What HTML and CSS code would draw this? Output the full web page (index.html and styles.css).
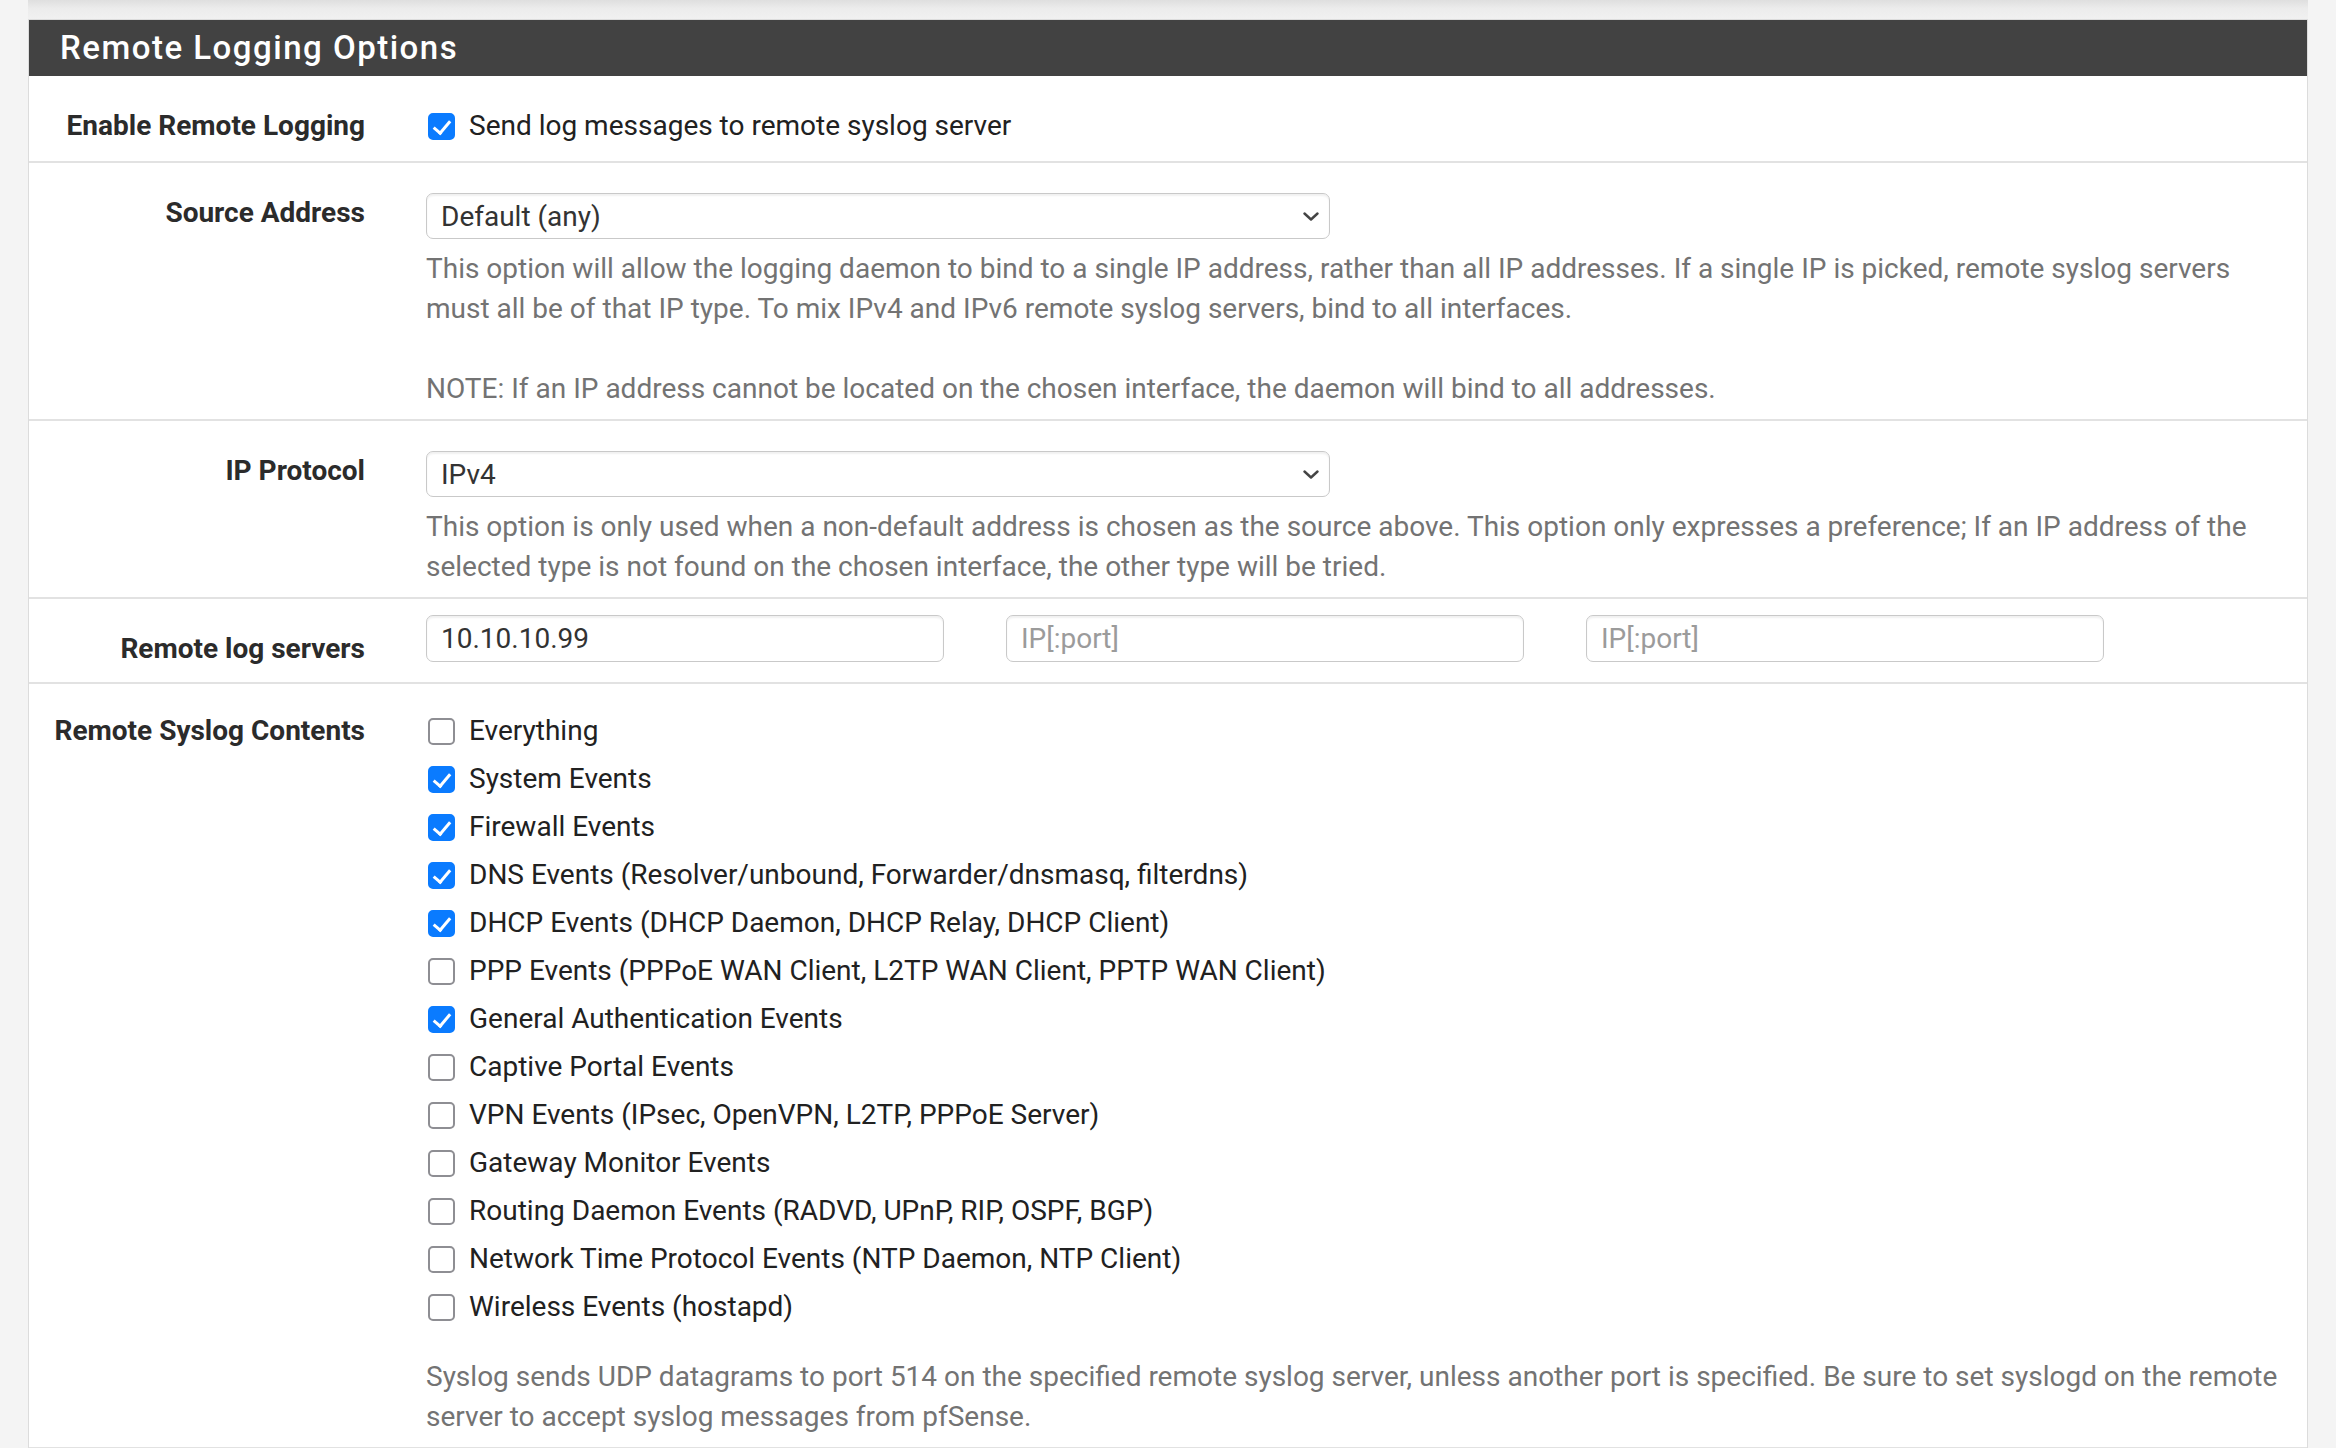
FILE: index.html
```html
<!DOCTYPE html>
<html lang="en">
<head>
    <meta charset="UTF-8">
    <title>Remote Logging Options</title>
    <link rel="stylesheet" href="styles.css">
</head>
<body>
    <div class="container">
        <div class="shade"></div>

        <div class="panel">
            <div class="panel-heading">
                <h2 class="panel-title">Remote Logging Options</h2>
            </div>

            <div class="panel-body">
                <div class="form-group">
                    <span class="control-label">Enable Remote Logging</span>
                    <div class="controls">
                        <label class="check"><input type="checkbox" checked> Send log messages to remote syslog server</label>
                    </div>
                </div>

                <div class="form-group">
                    <span class="control-label">Source Address</span>
                    <div class="controls">
                        <div class="select-wrap">
                            <select class="form-control">
                                <option>Default (any)</option>
                            </select>
                            <svg class="caret" width="16" height="9" viewBox="0 0 16 9"><polyline points="1.5,1.5 8,7.5 14.5,1.5" fill="none" stroke="#444" stroke-width="2.4" stroke-linecap="round" stroke-linejoin="round"/></svg>
                        </div>
                        <p class="help-block">This option will allow the logging daemon to bind to a single IP address, rather than all IP addresses. If a single IP is picked, remote syslog servers<br>must all be of that IP type. To mix IPv4 and IPv6 remote syslog servers, bind to all interfaces.<br><br>NOTE: If an IP address cannot be located on the chosen interface, the daemon will bind to all addresses.</p>
                    </div>
                </div>

                <div class="form-group">
                    <span class="control-label">IP Protocol</span>
                    <div class="controls">
                        <div class="select-wrap">
                            <select class="form-control">
                                <option>IPv4</option>
                            </select>
                            <svg class="caret" width="16" height="9" viewBox="0 0 16 9"><polyline points="1.5,1.5 8,7.5 14.5,1.5" fill="none" stroke="#444" stroke-width="2.4" stroke-linecap="round" stroke-linejoin="round"/></svg>
                        </div>
                        <p class="help-block">This option is only used when a non-default address is chosen as the source above. This option only expresses a preference; If an IP address of the<br>selected type is not found on the chosen interface, the other type will be tried.</p>
                    </div>
                </div>

                <div class="form-group servers">
                    <span class="control-label">Remote log servers</span>
                    <div class="controls server-inputs">
                        <input class="form-control" type="text" value="10.10.10.99">
                        <input class="form-control" type="text" placeholder="IP[:port]">
                        <input class="form-control" type="text" placeholder="IP[:port]">
                    </div>
                </div>

                <div class="form-group contents">
                    <span class="control-label">Remote Syslog Contents</span>
                    <div class="controls">
                        <label class="check"><input type="checkbox"> Everything</label>
                        <label class="check"><input type="checkbox" checked> System Events</label>
                        <label class="check"><input type="checkbox" checked> Firewall Events</label>
                        <label class="check"><input type="checkbox" checked> DNS Events (Resolver/unbound, Forwarder/dnsmasq, filterdns)</label>
                        <label class="check"><input type="checkbox" checked> DHCP Events (DHCP Daemon, DHCP Relay, DHCP Client)</label>
                        <label class="check"><input type="checkbox"> PPP Events (PPPoE WAN Client, L2TP WAN Client, PPTP WAN Client)</label>
                        <label class="check"><input type="checkbox" checked> General Authentication Events</label>
                        <label class="check"><input type="checkbox"> Captive Portal Events</label>
                        <label class="check"><input type="checkbox"> VPN Events (IPsec, OpenVPN, L2TP, PPPoE Server)</label>
                        <label class="check"><input type="checkbox"> Gateway Monitor Events</label>
                        <label class="check"><input type="checkbox"> Routing Daemon Events (RADVD, UPnP, RIP, OSPF, BGP)</label>
                        <label class="check"><input type="checkbox"> Network Time Protocol Events (NTP Daemon, NTP Client)</label>
                        <label class="check"><input type="checkbox"> Wireless Events (hostapd)</label>
                        <p class="help-block footer-help">Syslog sends UDP datagrams to port 514 on the specified remote syslog server, unless another port is specified. Be sure to set syslogd on the remote<br>server to accept syslog messages from pfSense.</p>
                    </div>
                </div>
            </div>
        </div>
    </div>
</body>
</html>
```

FILE: styles.css
```css
/* Reset */
* {
    margin: 0;
    padding: 0;
    box-sizing: border-box;
}

body {
    font-family: Roboto, 'Liberation Sans', sans-serif;
    font-size: 28px;
    line-height: 40px;
    color: #212121;
    background: #f4f4f4;
}

.container {
    margin: 0 28px;
}

/* Bottom of the panel above */
.shade {
    height: 19px;
    background: linear-gradient(#dfdfdf, #ececec 45%, #f1f1f1);
}

/* Panel */
.panel {
    background: #fff;
    border: 1px solid #dcdcdc;
    border-bottom: none;
}

.panel-heading {
    height: 56px;
    background: #424242;
    padding-left: 31px;
}

.panel-title {
    font-size: 33px;
    font-weight: 500;
    line-height: 56px;
    letter-spacing: 1.5px;
    color: #fff;
}

/* Rows */
.form-group {
    display: flex;
    padding: 30px 20px 10px 0;
    border-bottom: 2px solid #e2e2e2;
}

.form-group:first-child {
    padding-bottom: 15px;
}

.control-label {
    flex: none;
    width: 336px;
    text-align: right;
    font-weight: 700;
    color: #2b2b2b;
}

.controls {
    flex: 1;
    margin-left: 61px;
}

/* Checkboxes */
.check {
    display: flex;
    align-items: center;
    height: 40px;
}

.contents .check {
    margin-bottom: 8px;
}

.check input {
    appearance: none;
    -webkit-appearance: none;
    flex: none;
    position: relative;
    width: 27px;
    height: 27px;
    margin: 0 14px 0 2px;
    border: 2px solid #8e8e93;
    border-radius: 5px;
    background: #fff;
}

.check input:checked {
    background: #0a7bff;
    border-color: #0a7bff;
}

.check input:checked::after {
    content: "";
    position: absolute;
    left: 7px;
    top: 2px;
    width: 7px;
    height: 14px;
    border: solid #fff;
    border-width: 0 3.5px 3.5px 0;
    transform: rotate(40deg);
}

/* Select and inputs */
.form-control {
    font-family: inherit;
    font-size: 28px;
    color: #333;
    height: 46px;
    padding: 0 14px;
    background: #fff;
    border: 1px solid #c9c9c9;
    border-radius: 7px;
    box-shadow: inset 0 2px 2px rgba(0, 0, 0, 0.06);
    outline: none;
}

.select-wrap {
    position: relative;
    width: 904px;
}

select.form-control {
    appearance: none;
    -webkit-appearance: none;
    width: 100%;
}

.caret {
    position: absolute;
    right: 11px;
    top: 19px;
}

.help-block {
    margin-top: 10px;
    color: #737373;
}

/* Remote log servers */
.servers {
    padding-top: 16px;
    padding-bottom: 13px;
}

.servers .control-label {
    padding-top: 14px;
}

.server-inputs {
    display: flex;
    gap: 62px;
}

.server-inputs .form-control {
    width: 518px;
    height: 47px;
}

.server-inputs .form-control::placeholder {
    color: #9b9b9b;
}

.contents {
    padding-top: 27px;
}

.footer-help {
    margin-top: 30px;
}
```
